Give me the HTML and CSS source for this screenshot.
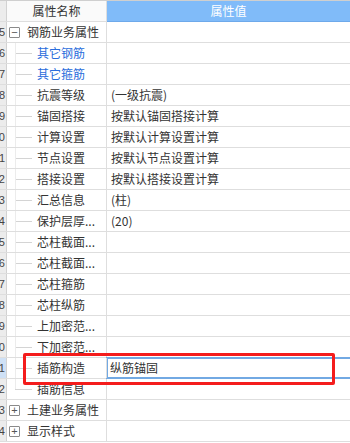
FILE: index.html
```html
<!doctype html>
<html>

<head>
    <meta charset="utf-8">
    <meta name="viewport" content="width=device-width, initial-scale=1.0">
    <title>属性编辑器</title>
    <link rel="stylesheet" href="styles.css">
</head>

<body>
    <div class="props">
        <!-- Заголовок таблиці -->
        <div class="row head">
            <div class="num"></div>
            <div class="name">属性名称</div>
            <div class="val">属性值</div>
        </div>

        <div class="row">
            <div class="num"><span>5</span></div>
            <div class="name group"><span class="toggle">−</span>钢筋业务属性</div>
            <div class="val"></div>
        </div>
        <div class="row">
            <div class="num"><span>6</span></div>
            <div class="name child blue">其它钢筋</div>
            <div class="val"></div>
        </div>
        <div class="row">
            <div class="num"><span>7</span></div>
            <div class="name child blue">其它箍筋</div>
            <div class="val"></div>
        </div>
        <div class="row">
            <div class="num"><span>8</span></div>
            <div class="name child">抗震等级</div>
            <div class="val">(一级抗震)</div>
        </div>
        <div class="row">
            <div class="num"><span>9</span></div>
            <div class="name child">锚固搭接</div>
            <div class="val">按默认锚固搭接计算</div>
        </div>
        <div class="row">
            <div class="num"><span>10</span></div>
            <div class="name child">计算设置</div>
            <div class="val">按默认计算设置计算</div>
        </div>
        <div class="row">
            <div class="num"><span>11</span></div>
            <div class="name child">节点设置</div>
            <div class="val">按默认节点设置计算</div>
        </div>
        <div class="row">
            <div class="num"><span>12</span></div>
            <div class="name child">搭接设置</div>
            <div class="val">按默认搭接设置计算</div>
        </div>
        <div class="row">
            <div class="num"><span>13</span></div>
            <div class="name child">汇总信息</div>
            <div class="val">(柱)</div>
        </div>
        <div class="row">
            <div class="num"><span>14</span></div>
            <div class="name child">保护层厚...</div>
            <div class="val">(20)</div>
        </div>
        <div class="row">
            <div class="num"><span>15</span></div>
            <div class="name child">芯柱截面...</div>
            <div class="val"></div>
        </div>
        <div class="row">
            <div class="num"><span>16</span></div>
            <div class="name child">芯柱截面...</div>
            <div class="val"></div>
        </div>
        <div class="row">
            <div class="num"><span>17</span></div>
            <div class="name child">芯柱箍筋</div>
            <div class="val"></div>
        </div>
        <div class="row">
            <div class="num"><span>18</span></div>
            <div class="name child">芯柱纵筋</div>
            <div class="val"></div>
        </div>
        <div class="row">
            <div class="num"><span>19</span></div>
            <div class="name child">上加密范...</div>
            <div class="val"></div>
        </div>
        <div class="row">
            <div class="num"><span>20</span></div>
            <div class="name child">下加密范...</div>
            <div class="val"></div>
        </div>
        <!-- Вибраний рядок -->
        <div class="row selected">
            <div class="num"><span>21</span></div>
            <div class="name child">插筋构造</div>
            <div class="val">纵筋锚固</div>
        </div>
        <div class="row">
            <div class="num"><span>22</span></div>
            <div class="name child last">插筋信息</div>
            <div class="val"></div>
        </div>
        <div class="row">
            <div class="num"><span>23</span></div>
            <div class="name group"><span class="toggle">+</span>土建业务属性</div>
            <div class="val"></div>
        </div>
        <div class="row">
            <div class="num"><span>24</span></div>
            <div class="name group"><span class="toggle">+</span>显示样式</div>
            <div class="val"></div>
        </div>

        <!-- Червона рамка-позначка -->
        <div class="mark"></div>
    </div>
</body>

</html>
```

FILE: styles.css
```css
body {
    margin: 0;
    padding: 0;
    background: #fff;
    font-family: "Noto Sans CJK SC", "Liberation Sans", sans-serif;
    font-size: 12px;
    color: #333;
}

.props {
    position: relative;
    width: 350px;
    height: 443px;
    overflow: hidden;
}

.row {
    display: flex;
    height: 20px;
    line-height: 20px;
    border-bottom: 1px solid #dedede;
}

.num {
    width: 6px;
    flex-shrink: 0;
    display: flex;
    justify-content: flex-end;
    overflow: hidden;
    background: #ececec;
    border-right: 1px solid #d2d2d2;
    color: #444;
    font-family: "Liberation Sans", sans-serif;
    font-size: 11px;
}

.num span {
    white-space: nowrap;
    margin-right: 1px;
}

.name {
    width: 99px;
    flex-shrink: 0;
    position: relative;
    white-space: nowrap;
    overflow: hidden;
    border-right: 1px solid #dedede;
}

.val {
    flex: 1;
    padding-left: 4px;
    white-space: nowrap;
    overflow: hidden;
}

/* заголовок */
.head {
    height: 20px;
    border-top: 1px solid #cfcfcf;
}

.head .name {
    text-align: center;
    background: #fafafa;
}

.head .val {
    padding-left: 0;
    text-align: center;
    color: #fff;
    background: #80bbf9;
    border-bottom: 1px solid #6ea9ea;
    margin-bottom: -1px;
}

/* дерево */
.group {
    padding-left: 20px;
    width: 79px;
}

.toggle {
    position: absolute;
    left: 2px;
    top: 5px;
    width: 9px;
    height: 9px;
    border: 1px solid #8a8a8a;
    border-radius: 1px;
    font-family: "Liberation Sans", sans-serif;
    font-size: 11px;
    line-height: 8px;
    text-align: center;
    color: #555;
}

.child {
    padding-left: 30px;
    width: 69px;
}

.child::before {
    content: "";
    position: absolute;
    left: 8px;
    top: 10px;
    width: 17px;
    height: 1px;
    background: #d4d4d4;
}

.child::after {
    content: "";
    position: absolute;
    left: 8px;
    top: -1px;
    bottom: -1px;
    width: 1px;
    background: #ececec;
}

.child.last::after {
    bottom: 10px;
}

.blue {
    color: #2a6ddc;
}

/* вибраний рядок */
.selected .num {
    background: #cfe1f6;
}

.selected .val {
    padding-left: 2px;
    border: 2px solid #72a9e3;
    border-right: none;
    margin: -1px 0 -1px -1px;
    height: 18px;
    line-height: 18px;
    background: #fff;
}

.mark {
    position: absolute;
    left: 23px;
    top: 353px;
    width: 306px;
    height: 26px;
    border: 3px solid #f41c1c;
    border-radius: 2px;
}
```
